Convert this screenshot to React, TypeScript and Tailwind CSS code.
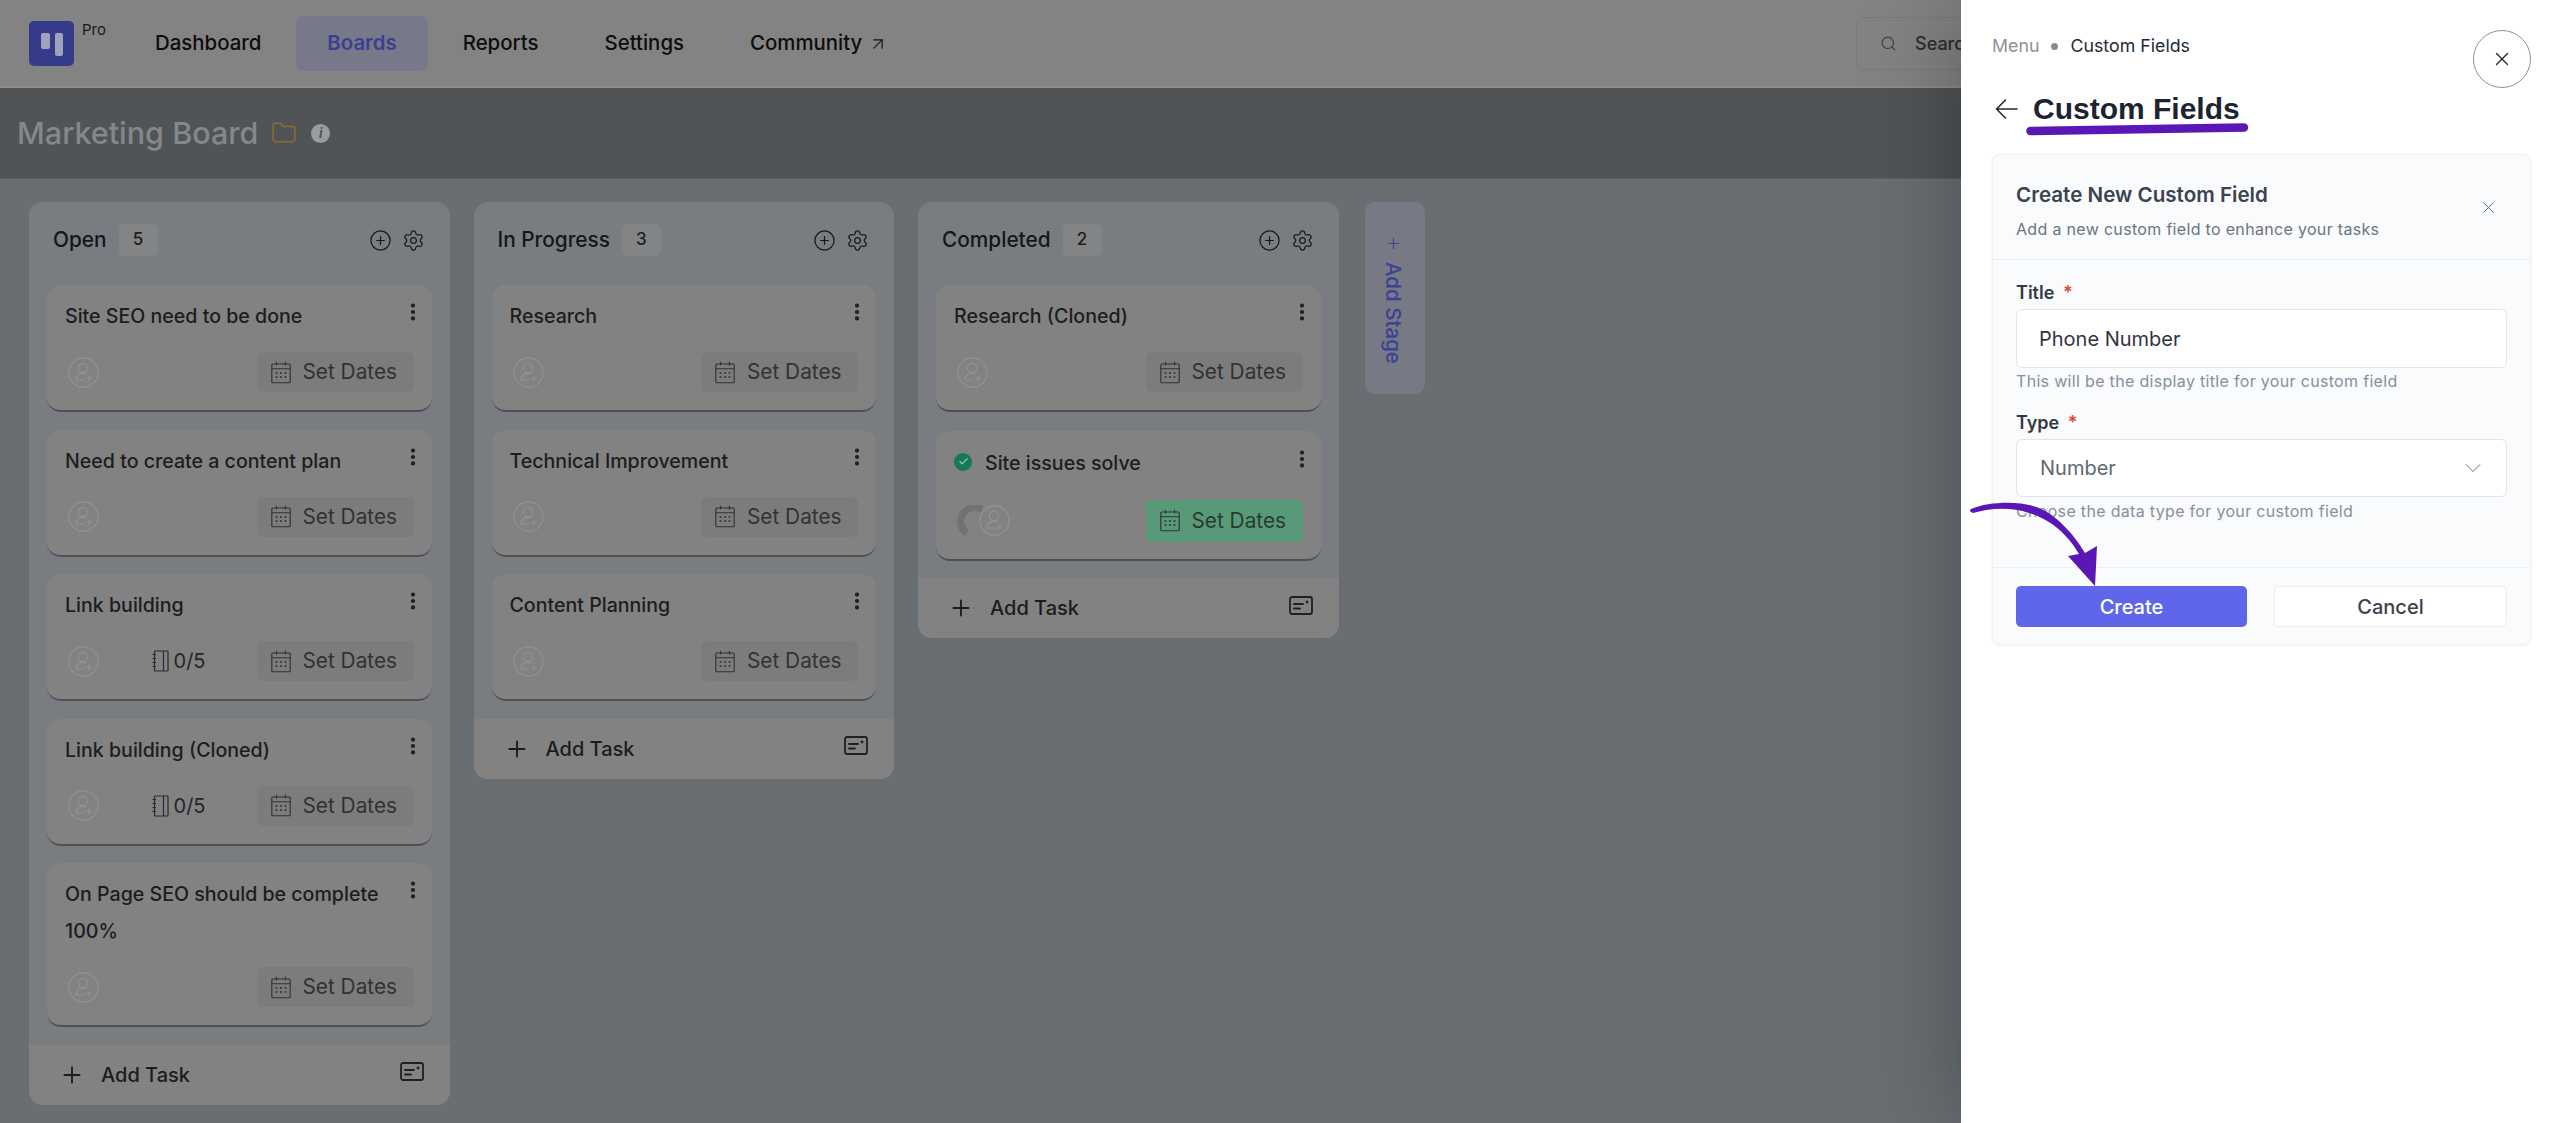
import React from "react";
import { ArrowUpRight, ChevronDown, CirclePlus, EllipsisVertical, Plus, Search, Settings, X, Folder, Check } from "lucide-react";

type Task = { title: string; sub?: boolean; done?: boolean };
type Col = { name: string; count: number; tasks: Task[] };

const columns: Col[] = [
  {
    name: "Open",
    count: 5,
    tasks: [
      { title: "Site SEO need to be done" },
      { title: "Need to create a content plan" },
      { title: "Link building", sub: true },
      { title: "Link building (Cloned)", sub: true },
      { title: "On Page SEO should be complete 100%" },
    ],
  },
  {
    name: "In Progress",
    count: 3,
    tasks: [{ title: "Research" }, { title: "Technical Improvement" }, { title: "Content Planning" }],
  },
  {
    name: "Completed",
    count: 2,
    tasks: [{ title: "Research (Cloned)" }, { title: "Site issues solve", done: true }],
  },
];

function AvatarIcon() {
  return (
    <svg width="31" height="31" viewBox="0 0 31 31" fill="none" stroke="#929292" strokeWidth="1.2" strokeLinecap="round" strokeLinejoin="round" className="shrink-0">
      <circle cx="15.5" cy="15.5" r="14.6" />
      <circle cx="15" cy="11" r="4.6" />
      <path d="M8 23c.4-4.2 3-6.6 7-6.6 1.2 0 2.2.2 3 .6" />
      <path d="M8 23h8" />
      <path d="M21 19v5M18.5 21.5h5" />
    </svg>
  );
}

function CalendarIcon() {
  return (
    <svg width="20" height="23" viewBox="0 0 20 23" fill="none" stroke="#2f3031" strokeWidth="1.1" className="shrink-0">
      <rect x="0.8" y="3" width="18.4" height="18.8" rx="1" />
      <path d="M0.8 7.8h18.4M5.5 0.8v3.6M14.5 0.8v3.6" />
      <path d="M4.5 12h2M9 12h2M13.5 12h2M4.5 16h2M9 16h2M13.5 16h2" strokeWidth="1.4" />
    </svg>
  );
}

function NotebookIcon() {
  return (
    <svg width="17" height="22" viewBox="0 0 17 22" fill="none" stroke="#2a2b2c" strokeWidth="1.2" className="shrink-0">
      <rect x="2.5" y="1" width="13.5" height="20" rx="0.8" />
      <path d="M11.5 1v20" />
      <path d="M0.5 4.5h3.5M0.5 8.5h3.5M0.5 12.5h3.5M0.5 16.5h3.5" />
    </svg>
  );
}

function AddCardIcon() {
  return (
    <svg width="24" height="19" viewBox="0 0 24 19" fill="none" stroke="#1f2021" strokeWidth="1.8" strokeLinecap="round" className="-mt-[6px]">
      <rect x="1" y="1" width="22" height="17" rx="2" />
      <path d="M5 8h9M5 12.5h6" />
      <circle cx="18" cy="6" r="1.4" fill="#1f2021" stroke="none" />
    </svg>
  );
}

function BackArrow() {
  return (
    <svg width="23" height="22" viewBox="0 0 23 22" fill="none" stroke="#232a35" strokeWidth="1.6" strokeLinecap="round" strokeLinejoin="round">
      <path d="M22 11H1.5M10.5 2 1.5 11l9 9" />
    </svg>
  );
}

function Card({ task }: { task: Task }) {
  return (
    <div className={`bg-[#828282] rounded-[14px] border-b-2 border-[#4e5154] pl-[18px] pr-[18px] ${task.done ? "pt-[14px] mt-[1px] pb-[17px]" : "pt-[13px] pb-[18px]"}`}>
      <div className="flex justify-between">
        <div className="flex items-center gap-[13px] text-[19.6px] leading-[37px] font-medium text-[#1c1d1e] self-start">
          {task.done && (
            <span className="shrink-0 w-[18px] h-[18px] rounded-full bg-[#15785a] flex items-center justify-center -mt-[3px]">
              <Check size={11} strokeWidth={2.5} color="#a5c9b8" />
            </span>
          )}
          <span>{task.title}</span>
        </div>
        <EllipsisVertical size={22} strokeWidth={2.6} color="#1d1e1f" className="shrink-0 -mr-[10px] mt-[3px]" />
      </div>
      <div className={`flex justify-between items-center ${task.done ? "mt-[18px]" : "mt-[17px]"}`}>
        {task.done ? (
          <div className="flex items-center ml-[3px]">
            <svg width="26" height="31" viewBox="0 0 26 31" fill="none" className="shrink-0">
              <path d="M25 4.5A13 13 0 0 0 10 28" stroke="#727272" strokeWidth="7" />
            </svg>
            <div className="-ml-[4px]"><AvatarIcon /></div>
          </div>
        ) : (
          <div className="ml-[3px]"><AvatarIcon /></div>
        )}
        <div className="flex items-center gap-[51px]">
          {task.sub && (
            <div className="flex items-center gap-[5px] text-[20px] text-[#262728]">
              <NotebookIcon />
              <span>0/5</span>
            </div>
          )}
          <div className={`flex items-center w-[157px] rounded-[6px] pl-[14px] gap-[12px] text-[20.8px] ${task.done ? "h-[42px] bg-[#589a78] text-[#2a3a30]" : "h-[40px] bg-[#7c7c7c] text-[#313233]"}`}>
            <CalendarIcon />
            <span>Set Dates</span>
          </div>
        </div>
      </div>
    </div>
  );
}

function Column({ col }: { col: Col }) {
  return (
    <div className="w-[420.5px] shrink-0 bg-[#797d81] rounded-[14px] overflow-hidden">
      <div className="flex items-center justify-between h-[76px] mb-[7px] pl-[24px] pr-[25px]">
        <div className="flex items-center gap-[12px]">
          <span className="text-[20.8px] font-medium text-[#151617]">{col.name}</span>
          <span className="w-[39px] h-[32px] rounded-[5px] bg-[#828486] flex items-center justify-center text-[17px] font-medium text-[#1c1d1e]">{col.count}</span>
        </div>
        <div className="flex items-center gap-[10px]">
          <CirclePlus size={23} strokeWidth={1.3} color="#17181a" />
          <Settings size={23} strokeWidth={1.3} color="#17181a" />
        </div>
      </div>
      <div className="flex flex-col gap-[17.5px] px-[18px]">
        {col.tasks.map((t) => (
          <Card key={t.title} task={t} />
        ))}
      </div>
      <div className="mt-[17.5px] h-[60px] bg-[#828282] flex items-center justify-between pl-[30px] pr-[26px]">
        <div className="flex items-center gap-[16px] text-[20px] font-medium text-[#1b1c1d]">
          <Plus size={26} strokeWidth={1.7} color="#1b1c1d" />
          <span>Add Task</span>
        </div>
        <AddCardIcon />
      </div>
    </div>
  );
}

export default function App() {
  return (
    <div className="relative h-screen w-full overflow-hidden bg-[#696e72] font-[Inter,sans-serif]">
      {/* top nav */}
      <header className="h-[88px] bg-[#838383] border-b-2 border-[#8c8c8c] flex items-center pl-[29px] pt-[1px]">
        <div className="flex items-start w-[95px] shrink-0">
          <div className="w-[45px] h-[45px] rounded-[5px] bg-[#363a8a] flex items-start justify-center gap-[5px] pt-[12px] shrink-0">
            <span className="w-[9px] h-[16px] rounded-[2px] bg-[#a0a2bb]" />
            <span className="w-[8px] h-[23px] rounded-[2px] bg-[#a0a2bb]" />
          </div>
          <span className="ml-[8px] text-[15px] leading-[20px] mt-[-1px] text-[#1a1a1a]">Pro</span>
        </div>
        <nav className="flex items-center gap-[4px] text-[20.4px] font-medium text-[#0d0d0d]">
          <a className="h-[55px] flex items-center px-[31px]">Dashboard</a>
          <a className="h-[55px] flex items-center px-[31px] rounded-[8px] bg-[#777888] text-[#3c3f92] font-semibold">Boards</a>
          <a className="h-[55px] flex items-center px-[31px]">Reports</a>
          <a className="h-[55px] flex items-center px-[31px]">Settings</a>
          <a className="h-[55px] flex items-center px-[31px] gap-[6px]">
            Community <ArrowUpRight size={20} strokeWidth={1.4} color="#151515" />
          </a>
        </nav>
        <div className="ml-auto mr-[594px] w-[110px] h-[53px] shrink-0 rounded-l-[8px] border border-[#7a7a7a] overflow-hidden flex items-center pl-[23px] gap-[18px] text-[#2c2c2c] text-[18px] font-medium">
          <Search size={17} strokeWidth={1.5} color="#3c3c3c" className="shrink-0" />
          <span>Search</span>
        </div>
      </header>

      {/* board title */}
      <div className="h-[91px] bg-[#505457] flex items-center pl-[17px] border-b border-[#5d6164]">
        <span className="text-[30.5px] font-medium text-[#85888a]">Marketing Board</span>
        <Folder size={26} strokeWidth={1.4} color="#8c6c2c" className="ml-[13px]" />
        <span className="ml-[14px] w-[19px] h-[19px] rounded-full bg-[#9a9d9f] flex items-center justify-center text-[13px] font-bold italic text-[#505457] leading-none">i</span>
      </div>

      {/* columns */}
      <main className="flex items-start gap-[24px] pl-[29px] pt-[23px]">
        {columns.map((c) => (
          <Column key={c.name} col={c} />
        ))}
        <div className="w-[60px] h-[192px] shrink-0 rounded-[10px] bg-[#777984] flex flex-col items-center pt-[33px] gap-[10px] pr-[3px] text-[#3c4096] ml-[2px]">
          <Plus size={17} strokeWidth={1.5} color="#3c4096" />
          <span className="[writing-mode:vertical-rl] text-[20.5px] font-medium leading-none">Add Stage</span>
        </div>
      </main>

      {/* drawer */}
      <aside className="absolute top-0 right-0 bottom-0 w-[599px] bg-white pl-[31px] pr-[29px] pt-[30px] shadow-[0_0_90px_rgba(0,0,0,0.3)]">
        <div className="relative h-[124px] flex justify-between items-start">
          <div>
            <div className="flex items-center h-[32px] text-[17.8px] text-[#232a35]">
              <span className="text-[#8c929b]">Menu</span>
              <span className="w-[7px] h-[7px] rounded-full bg-[#868c94] mx-[12px]" />
              <span>Custom Fields</span>
            </div>
            <div className="flex items-center h-[36px] mt-[29px] pl-[3px]">
              <BackArrow />
              <span className="ml-[15px] text-[30px] font-bold font-['Liberation_Sans',sans-serif] text-[#1c2431] leading-none">Custom Fields</span>
            </div>
          </div>
          <button className="w-[58px] h-[58px] rounded-full border border-[#8f9298] flex items-center justify-center bg-white">
            <X size={22} strokeWidth={1.5} color="#232a35" />
          </button>
          <svg width="224" height="14" viewBox="0 0 224 14" className="absolute left-[34px] top-[92px]" fill="none">
            <path d="M4.5 9 L218 5.5" stroke="#5a17b6" strokeWidth="8.5" strokeLinecap="round" />
          </svg>
        </div>

        <section className="relative rounded-[8px] border border-[#eef1f4] bg-[#f9fbfc] shadow-[0_1px_3px_rgba(20,30,50,0.06)]">
          <div className="relative h-[105px] border-b border-[#e9edf1] pl-[23px] pt-[27px]">
            <h2 className="text-[20.6px] leading-[26px] font-semibold text-[#3b4350]">Create New Custom Field</h2>
            <p className="mt-[9px] text-[16px] leading-[24px] tracking-[0.02em] text-[#6d747f]">Add a new custom field to enhance your tasks</p>
            <X size={19} strokeWidth={1.2} color="#5f6670" className="absolute right-[32px] top-[43px]" />
          </div>
          <div className="pl-[23px] pr-[23px] pt-[21px] pb-[46px]">
            <label className="block text-[18px] leading-[24px] font-semibold text-[#323946]">
              Title <span className="text-[#e0473c] ml-[4px]">*</span>
            </label>
            <div className="mt-[4px] h-[59px] rounded-[6px] border border-[#e1e5ea] bg-white flex items-center pl-[22px] text-[20px] text-[#2f3641]">Phone Number</div>
            <p className="mt-[3px] text-[16px] leading-[20px] tracking-[0.02em] text-[#87909a]">This will be the display title for your custom field</p>
            <label className="block mt-[20px] text-[18px] leading-[24px] font-semibold text-[#323946]">
              Type <span className="text-[#e0473c] ml-[4px]">*</span>
            </label>
            <div className="mt-[4px] h-[58px] rounded-[6px] border border-[#e1e5ea] bg-white flex items-center justify-between pl-[23px] pr-[19px] text-[20px] text-[#606773]">
              <span>Number</span>
              <ChevronDown size={28} strokeWidth={0.9} color="#8c929b" />
            </div>
            <p className="mt-[4px] text-[16px] leading-[20px] tracking-[0.02em] text-[#87909a]">Choose the data type for your custom field</p>
          </div>
          <div className="border-t border-[#edf0f3] pl-[23px] pr-[23px] pt-[18px] pb-[17px] flex gap-[27px]">
            <button className="flex-1 h-[41px] rounded-[5px] bg-[#5f66ea] text-white text-[20px] font-medium">Create</button>
            <button className="flex-1 h-[41px] rounded-[5px] bg-white border border-[#e9ecf0] text-[#3c424d] text-[20px] font-medium">Cancel</button>
          </div>
          <svg width="150" height="110" viewBox="0 0 150 110" className="absolute left-[-32px] top-[336px]">
            <path d="M10 18 C30 10 60 10 78 17 C95 24 112 42 124 62 L136 55 L134 95 L107 65 L118 63 C108 45 90 28 68 22 C50 16 30 17 12 22 Q7 20 10 18Z" fill="#5a17b6" />
          </svg>
        </section>
      </aside>
    </div>
  );
}
